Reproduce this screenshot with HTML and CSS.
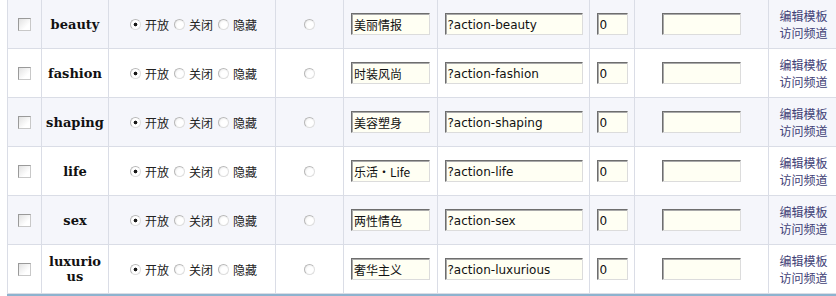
FILE: index.html
```html
<!DOCTYPE html>
<html>
<head>
  <title>频道管理</title>
  <link rel="stylesheet" href="styles.css">
</head>
<body>
  <table class="list">
    <tr class="alt">
      <td class="c-check"><input type="checkbox"></td>
      <td class="c-name">beauty</td>
      <td class="c-state"><div class="states"><label><input type="radio" name="s1" checked>开放</label><label><input type="radio" name="s1">关闭</label><label><input type="radio" name="s1">隐藏</label></div></td>
      <td class="c-default"><input type="radio" name="def"></td>
      <td class="c-title"><input type="text" class="txt w-title" value="美丽情报"></td>
      <td class="c-url"><input type="text" class="txt w-url" value="?action-beauty"></td>
      <td class="c-order"><input type="text" class="txt w-order" value="0"></td>
      <td class="c-domain"><input type="text" class="txt w-domain" value=""></td>
      <td class="c-ops"><a href="#">编辑模板</a><br><a href="#">访问频道</a></td>
    </tr>
    <tr>
      <td class="c-check"><input type="checkbox"></td>
      <td class="c-name">fashion</td>
      <td class="c-state"><div class="states"><label><input type="radio" name="s2" checked>开放</label><label><input type="radio" name="s2">关闭</label><label><input type="radio" name="s2">隐藏</label></div></td>
      <td class="c-default"><input type="radio" name="def"></td>
      <td class="c-title"><input type="text" class="txt w-title" value="时装风尚"></td>
      <td class="c-url"><input type="text" class="txt w-url" value="?action-fashion"></td>
      <td class="c-order"><input type="text" class="txt w-order" value="0"></td>
      <td class="c-domain"><input type="text" class="txt w-domain" value=""></td>
      <td class="c-ops"><a href="#">编辑模板</a><br><a href="#">访问频道</a></td>
    </tr>
    <tr class="alt">
      <td class="c-check"><input type="checkbox"></td>
      <td class="c-name">shaping</td>
      <td class="c-state"><div class="states"><label><input type="radio" name="s3" checked>开放</label><label><input type="radio" name="s3">关闭</label><label><input type="radio" name="s3">隐藏</label></div></td>
      <td class="c-default"><input type="radio" name="def"></td>
      <td class="c-title"><input type="text" class="txt w-title" value="美容塑身"></td>
      <td class="c-url"><input type="text" class="txt w-url" value="?action-shaping"></td>
      <td class="c-order"><input type="text" class="txt w-order" value="0"></td>
      <td class="c-domain"><input type="text" class="txt w-domain" value=""></td>
      <td class="c-ops"><a href="#">编辑模板</a><br><a href="#">访问频道</a></td>
    </tr>
    <tr>
      <td class="c-check"><input type="checkbox"></td>
      <td class="c-name">life</td>
      <td class="c-state"><div class="states"><label><input type="radio" name="s4" checked>开放</label><label><input type="radio" name="s4">关闭</label><label><input type="radio" name="s4">隐藏</label></div></td>
      <td class="c-default"><input type="radio" name="def"></td>
      <td class="c-title"><input type="text" class="txt w-title" value="乐活·Life"></td>
      <td class="c-url"><input type="text" class="txt w-url" value="?action-life"></td>
      <td class="c-order"><input type="text" class="txt w-order" value="0"></td>
      <td class="c-domain"><input type="text" class="txt w-domain" value=""></td>
      <td class="c-ops"><a href="#">编辑模板</a><br><a href="#">访问频道</a></td>
    </tr>
    <tr class="alt">
      <td class="c-check"><input type="checkbox"></td>
      <td class="c-name">sex</td>
      <td class="c-state"><div class="states"><label><input type="radio" name="s5" checked>开放</label><label><input type="radio" name="s5">关闭</label><label><input type="radio" name="s5">隐藏</label></div></td>
      <td class="c-default"><input type="radio" name="def"></td>
      <td class="c-title"><input type="text" class="txt w-title" value="两性情色"></td>
      <td class="c-url"><input type="text" class="txt w-url" value="?action-sex"></td>
      <td class="c-order"><input type="text" class="txt w-order" value="0"></td>
      <td class="c-domain"><input type="text" class="txt w-domain" value=""></td>
      <td class="c-ops"><a href="#">编辑模板</a><br><a href="#">访问频道</a></td>
    </tr>
    <tr>
      <td class="c-check"><input type="checkbox"></td>
      <td class="c-name">luxurious</td>
      <td class="c-state"><div class="states"><label><input type="radio" name="s6" checked>开放</label><label><input type="radio" name="s6">关闭</label><label><input type="radio" name="s6">隐藏</label></div></td>
      <td class="c-default"><input type="radio" name="def"></td>
      <td class="c-title"><input type="text" class="txt w-title" value="奢华主义"></td>
      <td class="c-url"><input type="text" class="txt w-url" value="?action-luxurious"></td>
      <td class="c-order"><input type="text" class="txt w-order" value="0"></td>
      <td class="c-domain"><input type="text" class="txt w-domain" value=""></td>
      <td class="c-ops"><a href="#">编辑模板</a><br><a href="#">访问频道</a></td>
    </tr>
  </table>
  <div class="footer-bar"></div>
</body>
</html>
```

FILE: styles.css
```css
html, body {
  overflow: hidden;
}

body {
  margin: 0;
  padding: 0;
  background: #fff;
  font-family: "Noto Sans CJK SC", "DejaVu Sans", sans-serif;
  font-size: 12px;
  color: #333;
}

.list {
  margin-left: 7px;
  width: 832px;
  table-layout: fixed;
  border-collapse: separate;
  border-spacing: 0;
  border-left: 1px solid #dadde6;
}

.list td {
  box-sizing: border-box;
  height: 49px;
  padding: 0;
  border-right: 1px solid #dadde6;
  border-bottom: 1px solid #dadde6;
  text-align: center;
  vertical-align: middle;
}

.list tr.alt td {
  background: #f5f6fb;
}

.c-check { width: 34px; }
.c-name { width: 67px; }
.c-state { width: 167px; }
.c-default { width: 68px; }
.c-title { width: 94px; }
.c-url { width: 152px; }
.c-order { width: 45px; }
.c-domain { width: 134px; }
.c-ops { width: 70px; }

.list td.c-name {
  padding: 0 4px;
  font-family: "DejaVu Serif", serif;
  font-weight: bold;
  font-size: 13px;
  line-height: 15px;
  color: #111;
  word-break: break-all;
}

input[type="checkbox"] {
  appearance: none;
  display: block;
  box-sizing: border-box;
  width: 13px;
  height: 13px;
  margin: 1px auto 0;
  border: 1px solid #9a9a9a;
  border-right-color: #c8c8c8;
  border-bottom-color: #c8c8c8;
  background: linear-gradient(135deg, #e2e2e2, #fff 70%);
}

input[type="radio"] {
  appearance: none;
  box-sizing: border-box;
  width: 11px;
  height: 11px;
  margin: 0;
  border-radius: 50%;
  border: 1px solid #b8b8b8;
  border-bottom-color: #dedede;
  border-right-color: #dedede;
  background: radial-gradient(circle at 60% 60%, #fff 40%, #e6e6e6);
}

input[type="radio"]:checked {
  background: radial-gradient(circle, #1a1a1a 0 1.6px, #fff 2.2px);
}

.c-default input[type="radio"] {
  display: block;
  margin: 1px auto 0;
}

.states {
  display: flex;
  justify-content: center;
  align-items: center;
  gap: 5px;
  padding-left: 3px;
}

.states label {
  display: flex;
  align-items: center;
  gap: 4px;
  color: #222;
}

.txt {
  box-sizing: border-box;
  display: block;
  margin: 0 auto;
  height: 22px;
  padding: 1px 2px 0;
  border: 1px solid;
  border-color: #6e6e6e #dcdcdc #dcdcdc #6e6e6e;
  box-shadow: inset 1px 1px 0 #a9a9a9;
  background: #fffff3;
  font-family: "DejaVu Sans", "Noto Sans CJK SC", sans-serif;
  font-size: 12px;
  color: #111;
  outline: none;
}

.w-title {
  width: 79px;
  font-family: "Noto Sans CJK SC", sans-serif;
}

.w-url { width: 138px; }
.w-order { width: 31px; }
.w-domain { width: 79px; }

.c-ops {
  line-height: 17px;
}

.c-ops a {
  color: #3f4176;
  text-decoration: none;
}

.footer-bar {
  margin-left: 7px;
  height: 6px;
  background: #8db3cf;
}
```
